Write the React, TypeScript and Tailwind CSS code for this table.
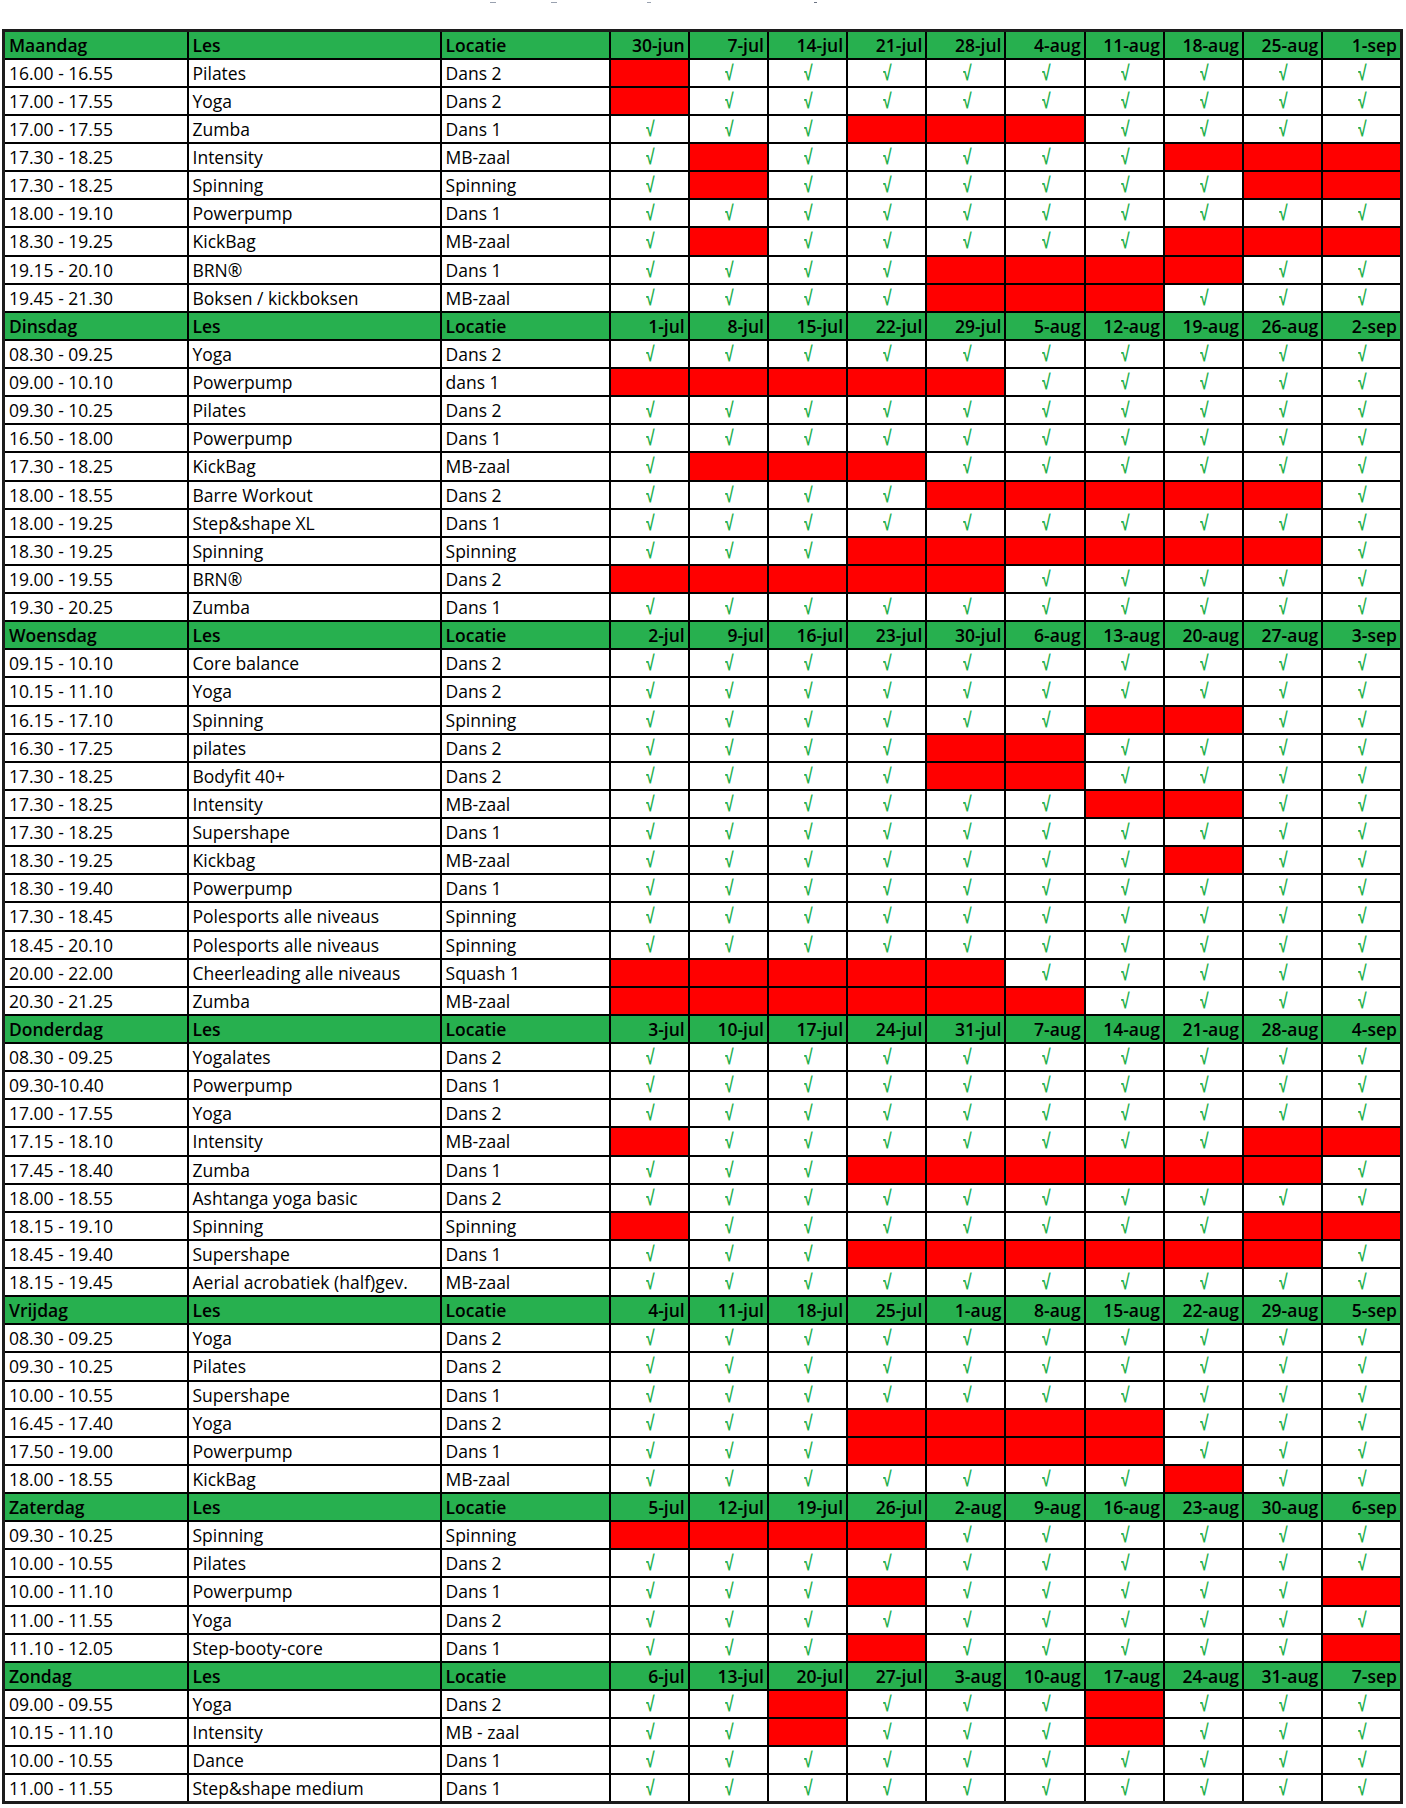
import React from "react";

type Row = [string, string, string, number[]];
type Block = { day: string; dates: string[]; rows: Row[] };

const blocks: Block[] = [
  {
    day: "Maandag",
    dates: ["30-jun", "7-jul", "14-jul", "21-jul", "28-jul", "4-aug", "11-aug", "18-aug", "25-aug", "1-sep"],
    rows: [
      ["16.00 - 16.55", "Pilates", "Dans 2", [0]],
      ["17.00 - 17.55", "Yoga", "Dans 2", [0]],
      ["17.00 - 17.55", "Zumba", "Dans 1", [3, 4, 5]],
      ["17.30 - 18.25", "Intensity", "MB-zaal", [1, 7, 8, 9]],
      ["17.30 - 18.25", "Spinning", "Spinning", [1, 8, 9]],
      ["18.00 - 19.10", "Powerpump", "Dans 1", []],
      ["18.30 - 19.25", "KickBag", "MB-zaal", [1, 7, 8, 9]],
      ["19.15 - 20.10", "BRN®", "Dans 1", [4, 5, 6, 7]],
      ["19.45 - 21.30", "Boksen / kickboksen", "MB-zaal", [4, 5, 6]],
    ],
  },
  {
    day: "Dinsdag",
    dates: ["1-jul", "8-jul", "15-jul", "22-jul", "29-jul", "5-aug", "12-aug", "19-aug", "26-aug", "2-sep"],
    rows: [
      ["08.30 - 09.25", "Yoga", "Dans 2", []],
      ["09.00 - 10.10", "Powerpump", "dans 1", [0, 1, 2, 3, 4]],
      ["09.30 - 10.25", "Pilates", "Dans 2", []],
      ["16.50 - 18.00", "Powerpump", "Dans 1", []],
      ["17.30 - 18.25", "KickBag", "MB-zaal", [1, 2, 3]],
      ["18.00 - 18.55", "Barre Workout", "Dans 2", [4, 5, 6, 7, 8]],
      ["18.00 - 19.25", "Step&shape XL", "Dans 1", []],
      ["18.30 - 19.25", "Spinning", "Spinning", [3, 4, 5, 6, 7, 8]],
      ["19.00 - 19.55", "BRN®", "Dans 2", [0, 1, 2, 3, 4]],
      ["19.30 - 20.25", "Zumba", "Dans 1", []],
    ],
  },
  {
    day: "Woensdag",
    dates: ["2-jul", "9-jul", "16-jul", "23-jul", "30-jul", "6-aug", "13-aug", "20-aug", "27-aug", "3-sep"],
    rows: [
      ["09.15 - 10.10", "Core balance", "Dans 2", []],
      ["10.15 - 11.10", "Yoga", "Dans 2", []],
      ["16.15 - 17.10", "Spinning", "Spinning", [6, 7]],
      ["16.30 - 17.25", "pilates", "Dans 2", [4, 5]],
      ["17.30 - 18.25", "Bodyfit 40+", "Dans 2", [4, 5]],
      ["17.30 - 18.25", "Intensity", "MB-zaal", [6, 7]],
      ["17.30 - 18.25", "Supershape", "Dans 1", []],
      ["18.30 - 19.25", "Kickbag", "MB-zaal", [7]],
      ["18.30 - 19.40", "Powerpump", "Dans 1", []],
      ["17.30 - 18.45", "Polesports alle niveaus", "Spinning", []],
      ["18.45 - 20.10", "Polesports alle niveaus", "Spinning", []],
      ["20.00 - 22.00", "Cheerleading alle niveaus", "Squash 1", [0, 1, 2, 3, 4]],
      ["20.30 - 21.25", "Zumba", "MB-zaal", [0, 1, 2, 3, 4, 5]],
    ],
  },
  {
    day: "Donderdag",
    dates: ["3-jul", "10-jul", "17-jul", "24-jul", "31-jul", "7-aug", "14-aug", "21-aug", "28-aug", "4-sep"],
    rows: [
      ["08.30 - 09.25", "Yogalates", "Dans 2", []],
      ["09.30-10.40", "Powerpump", "Dans 1", []],
      ["17.00 - 17.55", "Yoga", "Dans 2", []],
      ["17.15 - 18.10", "Intensity", "MB-zaal", [0, 8, 9]],
      ["17.45 - 18.40", "Zumba", "Dans 1", [3, 4, 5, 6, 7, 8]],
      ["18.00 - 18.55", "Ashtanga yoga basic", "Dans 2", []],
      ["18.15 - 19.10", "Spinning", "Spinning", [0, 8, 9]],
      ["18.45 - 19.40", "Supershape", "Dans 1", [3, 4, 5, 6, 7, 8]],
      ["18.15 - 19.45", "Aerial acrobatiek (half)gev.", "MB-zaal", []],
    ],
  },
  {
    day: "Vrijdag",
    dates: ["4-jul", "11-jul", "18-jul", "25-jul", "1-aug", "8-aug", "15-aug", "22-aug", "29-aug", "5-sep"],
    rows: [
      ["08.30 - 09.25", "Yoga", "Dans 2", []],
      ["09.30 - 10.25", "Pilates", "Dans 2", []],
      ["10.00 - 10.55", "Supershape", "Dans 1", []],
      ["16.45 - 17.40", "Yoga", "Dans 2", [3, 4, 5, 6]],
      ["17.50 - 19.00", "Powerpump", "Dans 1", [3, 4, 5, 6]],
      ["18.00 - 18.55", "KickBag", "MB-zaal", [7]],
    ],
  },
  {
    day: "Zaterdag",
    dates: ["5-jul", "12-jul", "19-jul", "26-jul", "2-aug", "9-aug", "16-aug", "23-aug", "30-aug", "6-sep"],
    rows: [
      ["09.30 - 10.25", "Spinning", "Spinning", [0, 1, 2, 3]],
      ["10.00 - 10.55", "Pilates", "Dans 2", []],
      ["10.00 - 11.10", "Powerpump", "Dans 1", [3, 9]],
      ["11.00 - 11.55", "Yoga", "Dans 2", []],
      ["11.10 - 12.05", "Step-booty-core", "Dans 1", [3, 9]],
    ],
  },
  {
    day: "Zondag",
    dates: ["6-jul", "13-jul", "20-jul", "27-jul", "3-aug", "10-aug", "17-aug", "24-aug", "31-aug", "7-sep"],
    rows: [
      ["09.00 - 09.55", "Yoga", "Dans 2", [2, 6]],
      ["10.15 - 11.10", "Intensity", "MB - zaal", [2, 6]],
      ["10.00 - 10.55", "Dance", "Dans 1", []],
      ["11.00 - 11.55", "Step&shape medium", "Dans 1", []],
    ],
  },
];

const cellBase = "border-2 border-black p-0 overflow-hidden whitespace-nowrap";

export default function App() {
  return (
    <div className="bg-white w-[1406px] min-h-[1808px] font-['Open_Sans',sans-serif] text-black">
      <div className="h-[29px] flex items-start">
        <span className="ml-[490px] mt-[2px] w-[6px] h-[1px] bg-gray-400" />
        <span className="ml-[55px] mt-[2px] w-[6px] h-[1px] bg-gray-400" />
        <span className="ml-[90px] mt-[2px] w-[4px] h-[1px] bg-gray-400" />
        <span className="ml-[163px] mt-[2px] w-[3px] h-[1px] bg-gray-500" />
      </div>
      <div className="pl-[2px]">
        <table className="table-fixed border-collapse w-[1401px] border-[3px] border-[#1c1c1c] text-[17.5px] leading-[22px]">
          <colgroup>
            <col className="w-[184px]" />
            <col className="w-[253px]" />
            <col className="w-[169px]" />
            {Array.from({ length: 10 }).map((_, i) => (
              <col key={i} className="w-[79.2px]" />
            ))}
          </colgroup>
          <tbody>
            {blocks.map((b) => (
              <React.Fragment key={b.day}>
                <tr className="h-[28.13px] bg-[#27b04f]">
                  <td className={`${cellBase} pl-[4px] font-semibold align-bottom pb-[2px]`}>{b.day}</td>
                  <td className={`${cellBase} pl-[4px] font-semibold align-bottom pb-[2px]`}>Les</td>
                  <td className={`${cellBase} pl-[4px] font-semibold align-bottom pb-[2px]`}>Locatie</td>
                  {b.dates.map((d) => (
                    <td key={d} className={`${cellBase} pr-[3px] text-right font-semibold align-bottom pb-[2px]`}>
                      {d}
                    </td>
                  ))}
                </tr>
                {b.rows.map((r, ri) => (
                  <tr key={ri} className="h-[28.13px] bg-white">
                    <td className={`${cellBase} pl-[4px] align-middle`}>{r[0]}</td>
                    <td className={`${cellBase} pl-[4px] align-middle`}>{r[1]}</td>
                    <td className={`${cellBase} pl-[4px] align-middle`}>{r[2]}</td>
                    {b.dates.map((d, di) =>
                      r[3].includes(di) ? (
                        <td key={d} className={`${cellBase} bg-[#ff0000]`} />
                      ) : (
                        <td key={d} className={`${cellBase} text-center align-middle`}>
                          <span className="inline-block scale-x-75 pl-[3px] text-[#1fb04c] font-['Liberation_Sans',sans-serif] font-bold text-[21px] leading-[22px]">
                            √
                          </span>
                        </td>
                      )
                    )}
                  </tr>
                ))}
              </React.Fragment>
            ))}
          </tbody>
        </table>
      </div>
    </div>
  );
}
